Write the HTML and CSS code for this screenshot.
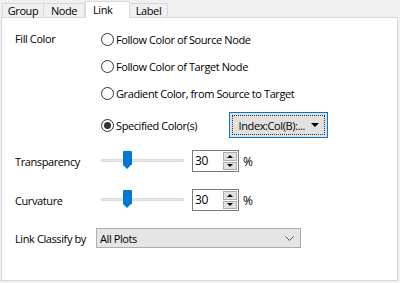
FILE: index.html
```html
<!DOCTYPE html>
<html lang="en">
<head>
    <meta charset="UTF-8">
    <title>Link Settings</title>
    <link rel="stylesheet" href="styles.css">
</head>
<body>
    <div class="tabs">
        <div class="tab tab-group">Group</div>
        <div class="tab tab-node">Node</div>
        <div class="tab tab-active">Link</div>
        <div class="tab tab-label">Label</div>
    </div>

    <div class="panel">
        <div class="row fill-row">
            <div class="label fill-label">Fill Color</div>
            <div class="options">
                <div class="option"><span class="radio"></span>Follow Color of Source Node</div>
                <div class="option"><span class="radio"></span>Follow Color of Target Node</div>
                <div class="option"><span class="radio"></span>Gradient Color, from Source to Target</div>
                <div class="option option-last">
                    <span class="radio checked"></span>
                    <span class="specified">Specified Color(s)</span>
                    <div class="color-btn">
                        <div class="color-btn-inner">
                            <span>Index:Col(B):...</span>
                            <span class="tri"></span>
                        </div>
                    </div>
                </div>
            </div>
        </div>

        <div class="row slider-row first-slider">
            <div class="label">Transparency</div>
            <div class="slider">
                <div class="track"></div>
                <div class="thumb"></div>
            </div>
            <div class="spin">
                <div class="spin-value">30</div>
                <div class="spin-btns">
                    <div class="spin-btn"><span class="up"></span></div>
                    <div class="spin-btn"><span class="down"></span></div>
                </div>
            </div>
            <span class="unit">%</span>
        </div>

        <div class="row slider-row">
            <div class="label">Curvature</div>
            <div class="slider">
                <div class="track"></div>
                <div class="thumb"></div>
            </div>
            <div class="spin">
                <div class="spin-value">30</div>
                <div class="spin-btns">
                    <div class="spin-btn"><span class="up"></span></div>
                    <div class="spin-btn"><span class="down"></span></div>
                </div>
            </div>
            <span class="unit">%</span>
        </div>

        <div class="row classify-row">
            <div class="label classify-label">Link Classify by</div>
            <div class="combo">
                <span>All Plots</span>
                <svg class="chevron" width="9" height="5" viewBox="0 0 9 5">
                    <path d="M0.5 0.5 L4.5 4.5 L8.5 0.5" fill="none" stroke="#555" stroke-width="1"/>
                </svg>
            </div>
        </div>
    </div>
</body>
</html>
```

FILE: styles.css
```css
body {
    margin: 0;
    background: #f0f0f0;
    font-family: "Open Sans", "Noto Sans", sans-serif;
    font-size: 11px;
    letter-spacing: -0.4px;
    color: #000;
    width: 400px;
    height: 283px;
    overflow: hidden;
}

.tabs {
    display: flex;
    align-items: flex-end;
    height: 17px;
    padding-left: 2px;
}

.tab {
    height: 13px;
    line-height: 13px;
    border: 1px solid #d9d9d9;
    border-bottom: none;
    background: #f0f0f0;
    text-align: center;
    font-size: 11px;
}

.tab-group {
    width: 40px;
}

.tab-node {
    width: 40px;
    border-left: none;
}

.tab-active {
    width: 43px;
    height: 16px;
    line-height: 15px;
    background: #fff;
    position: relative;
    z-index: 2;
    margin-bottom: -1px;
    text-align: left;
    text-indent: 7px;
}

.tab-label {
    width: 37px;
    border-left: none;
}

.panel {
    margin-left: 1px;
    width: 397px;
    height: 264px;
    background: #fff;
    border: 1px solid #d9d9d9;
    padding: 11px 0 0 13px;
    box-sizing: border-box;
}

.row {
    display: flex;
    align-items: center;
}

.label {
    width: 86px;
    flex-shrink: 0;
}

.fill-row {
    align-items: flex-start;
}

.fill-label {
    line-height: 20px;
}

.options {
    display: flex;
    flex-direction: column;
    gap: 7px;
}

.option {
    display: flex;
    align-items: center;
    height: 20px;
}

.option-last {
    height: 26px;
    margin-top: 2px;
}

.radio {
    width: 11px;
    height: 11px;
    border: 1px solid #333;
    border-radius: 50%;
    background: #fff;
    margin-right: 2px;
    position: relative;
    flex-shrink: 0;
}

.radio.checked::after {
    content: "";
    position: absolute;
    left: 2px;
    top: 2px;
    width: 7px;
    height: 7px;
    border-radius: 50%;
    background: #333;
}

.specified {
    width: 113px;
}

.color-btn {
    width: 99px;
    height: 26px;
    border: 1px solid #0078d7;
    box-sizing: border-box;
    background: #e1e1e1;
    padding: 2px;
}

.color-btn-inner {
    height: 100%;
    box-sizing: border-box;
    border: 1px dotted #333;
    display: flex;
    align-items: center;
    justify-content: flex-end;
    padding-right: 5px;
    gap: 6px;
}

.tri {
    width: 0;
    height: 0;
    border-left: 4px solid transparent;
    border-right: 4px solid transparent;
    border-top: 4px solid #000;
}

.slider-row {
    height: 22px;
    margin-top: 17px;
}

.first-slider {
    margin-top: 12px;
}

.slider {
    width: 83px;
    height: 22px;
    position: relative;
    margin-right: 8px;
}

.track {
    position: absolute;
    left: 0;
    right: 0;
    top: 9px;
    height: 3px;
    background: #e7e7e7;
    border: 1px solid #dcdcdc;
    box-sizing: border-box;
}

.thumb {
    position: absolute;
    left: 22px;
    top: 1px;
    width: 9px;
    height: 14px;
    background: #0078d7;
    border-radius: 1px 1px 0 0;
}

.thumb::after {
    content: "";
    position: absolute;
    left: 0;
    top: 14px;
    border-left: 4.5px solid transparent;
    border-right: 4.5px solid transparent;
    border-top: 4px solid #0078d7;
}

.spin {
    width: 47px;
    height: 22px;
    border: 1px solid #7a7a7a;
    box-sizing: border-box;
    display: flex;
    background: #fff;
}

.spin-value {
    flex: 1;
    line-height: 20px;
    padding-left: 2px;
    font-size: 12px;
}

.spin-btns {
    width: 15px;
    display: flex;
    flex-direction: column;
    padding: 1px 1px 1px 0;
    gap: 1px;
    box-sizing: border-box;
}

.spin-btn {
    flex: 1;
    background: #e1e1e1;
    border: 1px solid #adadad;
    display: flex;
    align-items: center;
    justify-content: center;
}

.up {
    border-left: 3px solid transparent;
    border-right: 3px solid transparent;
    border-bottom: 3px solid #000;
}

.down {
    border-left: 3px solid transparent;
    border-right: 3px solid transparent;
    border-top: 3px solid #000;
}

.unit {
    margin-left: 4px;
    font-size: 12px;
}

.classify-row {
    margin-top: 17px;
}

.classify-label {
    width: 81px;
}

.combo {
    width: 205px;
    height: 20px;
    box-sizing: border-box;
    background: #e5e5e5;
    border: 1px solid #adadad;
    display: flex;
    align-items: center;
    justify-content: space-between;
    padding: 0 6px 0 3px;
}
```
